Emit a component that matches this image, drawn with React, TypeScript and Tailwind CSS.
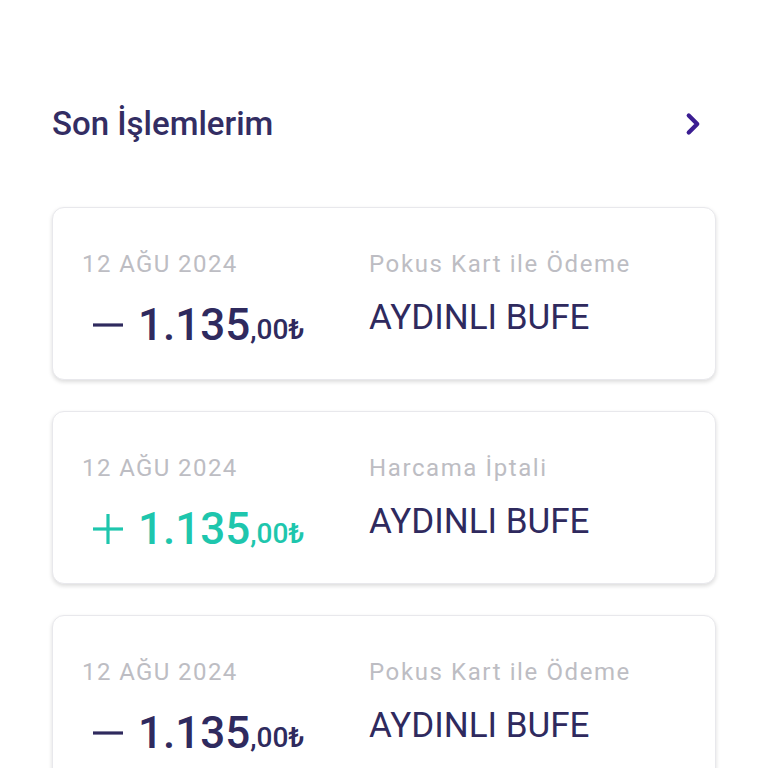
import { ChevronRight } from 'lucide-react'

type Tx = {
  date: string
  kind: string
  merchant: string
  sign: 'minus' | 'plus'
  whole: string
  cents: string
}

const transactions: Tx[] = [
  { date: '12 AĞU 2024', kind: 'Pokus Kart ile Ödeme', merchant: 'AYDINLI BUFE', sign: 'minus', whole: '1.135', cents: ',00₺' },
  { date: '12 AĞU 2024', kind: 'Harcama İptali', merchant: 'AYDINLI BUFE', sign: 'plus', whole: '1.135', cents: ',00₺' },
  { date: '12 AĞU 2024', kind: 'Pokus Kart ile Ödeme', merchant: 'AYDINLI BUFE', sign: 'minus', whole: '1.135', cents: ',00₺' },
]

function SignMark({ sign }: { sign: 'minus' | 'plus' }) {
  return (
    <svg width="32" height="32" viewBox="0 0 32 32" className="mr-[14px] shrink-0">
      <line x1="1" y1="16" x2="31" y2="16" stroke="currentColor" strokeWidth="3.2" />
      {sign === 'plus' && <line x1="16" y1="1" x2="16" y2="31" stroke="currentColor" strokeWidth="3.2" />}
    </svg>
  )
}

function TxCard({ tx }: { tx: Tx }) {
  const amountColor = tx.sign === 'plus' ? 'text-[#1ec6ad]' : 'text-[#2f2a5e]'
  return (
    <div className="h-[173px] rounded-[12px] border border-[#e8e8ec] bg-white pl-[29px] pt-[42px] shadow-[0_2px_4px_rgba(0,0,0,0.14)]">
      <div className="grid grid-cols-[287px_1fr]">
        <div className="text-[24px] leading-[28px] tracking-[1.4px] text-[#bdbdc3]">{tx.date}</div>
        <div className="text-[24px] leading-[28px] tracking-[1.6px] text-[#bdbdc3]">{tx.kind}</div>
        <div className={`mt-[18px] flex items-center pl-[10px] ${amountColor}`}>
          <SignMark sign={tx.sign} />
          <span className="text-[44px] font-medium leading-[48px]">{tx.whole}</span>
          <span className="mt-[10px] text-[28px] font-medium leading-[48px]">{tx.cents}</span>
        </div>
        <div className="mt-[16px] text-[35px] leading-[48px] text-[#2f2a5e]">{tx.merchant}</div>
      </div>
    </div>
  )
}

export default function App() {
  return (
    <div className="h-[768px] w-[768px] overflow-hidden bg-white px-[52px] pt-[100px] font-['Roboto','Liberation_Sans',sans-serif]">
      <div className="flex h-[48px] items-center justify-between">
        <h2 className="text-[33px] font-medium text-[#332d63]">Son İşlemlerim</h2>
        <ChevronRight className="mr-[6px] h-[34px] w-[34px] text-[#3b1d92]" strokeWidth={3} />
      </div>
      <div className="mt-[59px] flex flex-col gap-[31px]">
        {transactions.map((tx, i) => (
          <TxCard key={i} tx={tx} />
        ))}
      </div>
    </div>
  )
}
